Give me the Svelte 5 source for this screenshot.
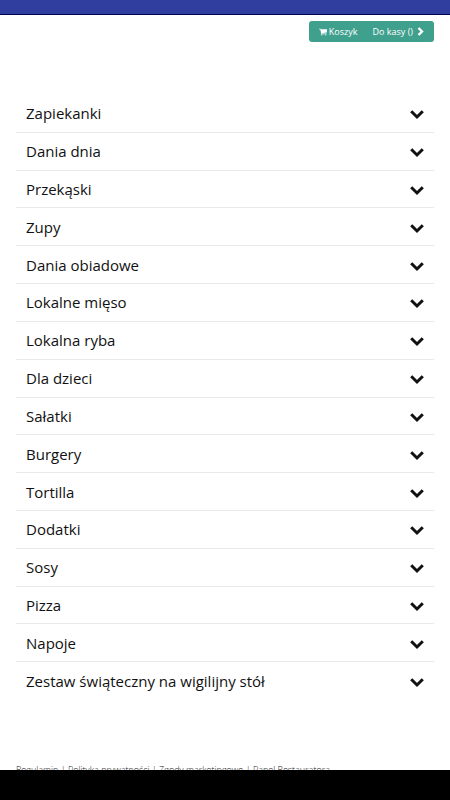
<script>
	let categories = [
		'Zapiekanki',
		'Dania dnia',
		'Przekąski',
		'Zupy',
		'Dania obiadowe',
		'Lokalne mięso',
		'Lokalna ryba',
		'Dla dzieci',
		'Sałatki',
		'Burgery',
		'Tortilla',
		'Dodatki',
		'Sosy',
		'Pizza',
		'Napoje',
		'Zestaw świąteczny na wigilijny stół'
	];

	let footerLinks = [
		'Regulamin',
		'Polityka prywatności',
		'Zgody marketingowe',
		'Panel Restauratora'
	];
</script>

<div class="screen">
	<header></header>

	<main>
		<nav class="cart">
			<a href="#koszyk">
				<svg class="cart-icon" viewBox="0 0 16 14" aria-hidden="true">
					<path
						d="M0 1.2C0 .8.3.5.7.5h2.2c.7 0 .8.7.9 1.2h11.5c.4 0 .7.3.7.7v5c0 .4-.3.6-.6.7l-10 1.2.2.9h8.9c.9 0 .9 1.3 0 1.3H4.7c-.9 0-.8-.8-.3-1.700L2.600 1.800H.7C.3 1.800 0 1.500 0 1.200z"
					/>
					<circle cx="5.6" cy="12.6" r="1.3" />
					<circle cx="13.5" cy="12.6" r="1.3" />
				</svg>
				Koszyk
			</a>
			<a href="#kasa">
				Do kasy ()
				<svg class="next-icon" viewBox="0 0 7 9" aria-hidden="true">
					<path d="M1.500 1L5 4.500 1.500 8" />
				</svg>
			</a>
		</nav>

		<ul>
			{#each categories as category}
				<li>
					<button type="button">
						<span>{category}</span>
						<svg class="chevron" viewBox="0 0 14 10" aria-hidden="true">
							<path d="M1.200 2.300L7 8 12.800 2.300" />
						</svg>
					</button>
				</li>
			{/each}
		</ul>

		<footer>
			{#each footerLinks as link, i}
				{#if i > 0}{' | '}{/if}<a href="#info">{link}</a>
			{/each}
		</footer>
	</main>

	<div class="system-bar"></div>
</div>

<style>
	:global(body) {
		background: #fff;
	}

	.screen {
		display: flex;
		flex-direction: column;
		height: 100vh;
		font-family: 'Open Sans', sans-serif;
		color: #111;
	}

	header {
		flex: none;
		height: 14px;
		background: #303f9f;
		border-bottom: 1px solid #000051;
	}

	main {
		flex: 1;
		min-height: 0;
		display: flex;
		flex-direction: column;
		padding: 6px 16px 0;
		overflow: hidden;
	}

	.cart {
		flex: none;
		align-self: flex-end;
		display: flex;
		gap: 15px;
		padding: 0 10px;
		border-radius: 3px;
		background: #3fa08e;
	}

	.cart a {
		display: flex;
		align-items: center;
		gap: 2px;
		color: #fff;
		font-size: 9px;
		line-height: 21px;
		text-decoration: none;
	}

	.cart-icon {
		width: 8px;
		height: 8px;
		fill: currentColor;
	}

	.next-icon {
		width: 7px;
		height: 9px;
		margin-left: 2px;
		fill: none;
		stroke: currentColor;
		stroke-width: 2.4;
	}

	ul {
		flex: 1;
		display: flex;
		flex-direction: column;
		margin: 53px 0 64px;
		padding: 0;
		list-style: none;
	}

	li {
		flex: 1;
		display: flex;
		border-bottom: 1px solid #e9e9e9;
	}

	li:last-child {
		border-bottom: none;
	}

	button {
		flex: 1;
		display: flex;
		align-items: center;
		justify-content: space-between;
		padding: 0 10px;
		border: none;
		background: none;
		color: inherit;
		font: inherit;
		font-size: 15px;
		line-height: 20px;
		text-align: left;
		cursor: pointer;
	}

	.chevron {
		flex: none;
		width: 14px;
		height: 10px;
		margin-top: 2px;
		overflow: visible;
		fill: none;
		stroke: currentColor;
		stroke-width: 3;
	}

	footer {
		flex: none;
		height: 7px;
		font-size: 9px;
		font-weight: 300;
		line-height: 14px;
		color: #222;
		white-space: nowrap;
	}

	footer a {
		color: inherit;
		text-decoration: none;
	}

	.system-bar {
		flex: none;
		height: 30px;
		background: #000;
	}
</style>
